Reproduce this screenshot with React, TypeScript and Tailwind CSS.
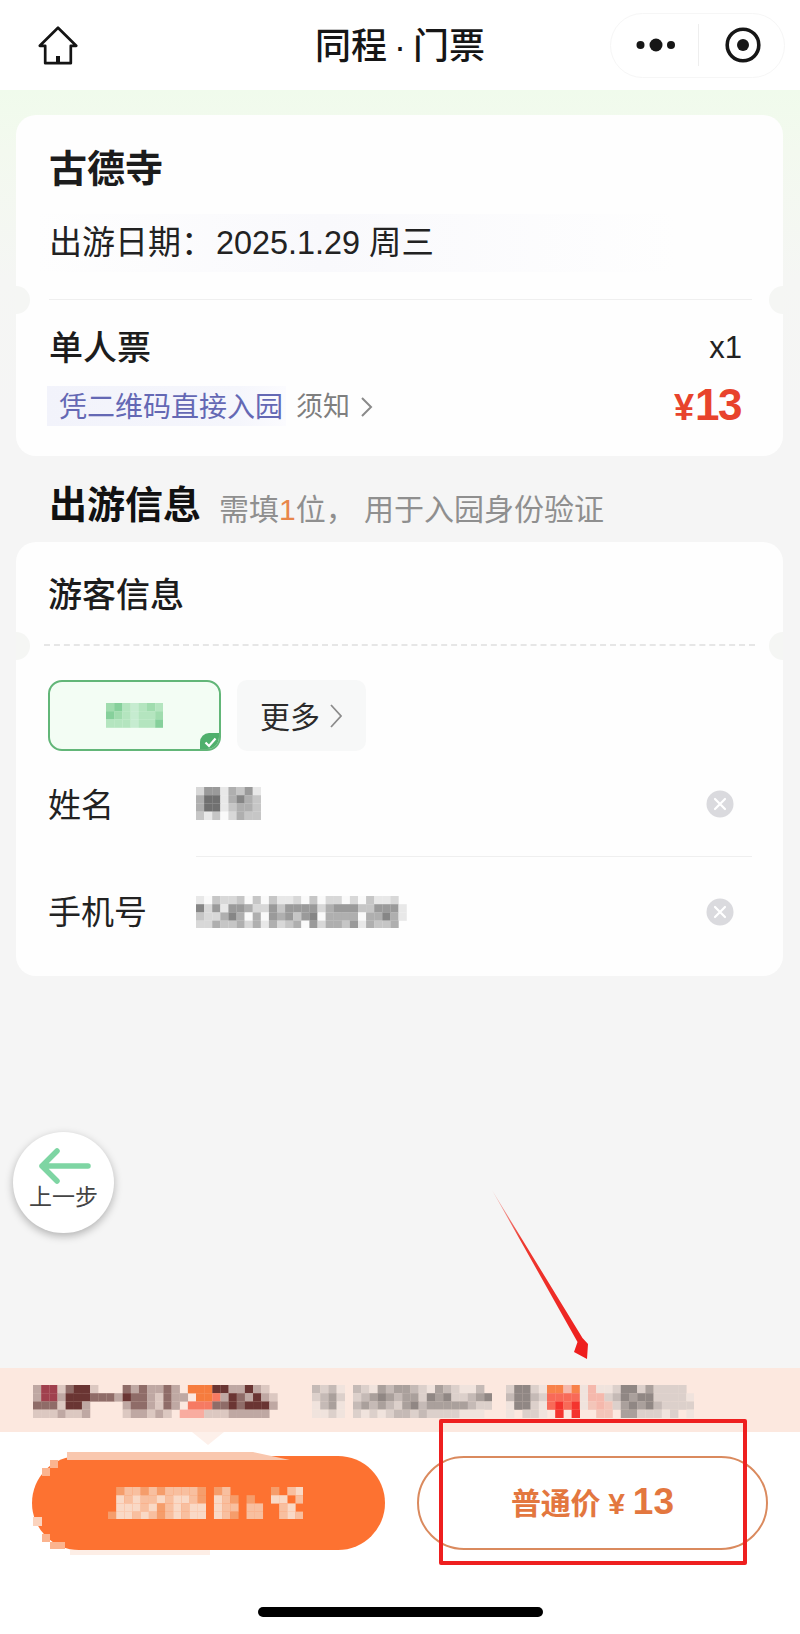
import React from "react";

const FONT = "font-['Liberation_Sans','Noto_Sans_CJK_SC',sans-serif]";

function Mosaic({ rows, palette, cw = 8, ch = 8, className = "" }: { rows: string[]; palette: Record<string, string>; cw?: number; ch?: number; className?: string }) {
  const cols = Math.max(...rows.map((r) => r.length));
  return (
    <svg width={cols * cw} height={rows.length * ch} viewBox={`0 0 ${cols * cw} ${rows.length * ch}`} className={"block shrink-0 blur-[0.5px] " + className}>
      {rows.flatMap((r, y) =>
        r.split("").map((c, x) =>
          palette[c] ? <rect key={x + "-" + y} x={x * cw} y={y * ch} width={cw + 0.2} height={ch + 0.2} fill={palette[c]} /> : null
        )
      )}
    </svg>
  );
}

const GRAY: Record<string, string> = { "0": "#fafafa", "1": "#e8e8e8", "2": "#d8d8d8", "3": "#c6c6c6", "4": "#afafaf", "5": "#9a9a9a", "6": "#868686", "7": "#707070" };
const GREEN: Record<string, string> = { a: "#a0dcae", b: "#86d09b", c: "#b4e5bf", d: "#c6ecd0" };
const PROMO: Record<string, string> = {
  a: "#bfa8a3", b: "#a0404e", c: "#6a3533", d: "#8f6c68", e: "#dcc8c1", f: "#f67c3e", g: "#f67a63", h: "#f9aca0",
  "1": "#f0e3dd", "2": "#dcd0cb", "3": "#c5bab6", "4": "#aaa09c", "5": "#908784", "6": "#7c7472",
  r: "#f4342e", s: "#f86a58", o: "#f88149", t: "#f5b8ac", u: "#f3c5b9",
};
const CREAM: Record<string, string> = { l: "#f9d9c6", m: "#f8bf9f", n: "#f59d6b" };

function CloseDot() {
  return (
    <svg width="28" height="28" viewBox="0 0 28 28" className="shrink-0">
      <circle cx="14" cy="14" r="13.5" fill="#dadade" />
      <path d="M9 9 L19 19 M19 9 L9 19" stroke="#fff" strokeWidth="2.2" strokeLinecap="round" />
    </svg>
  );
}

function Notches({ top }: { top: string }) {
  return (
    <>
      <div className={"absolute -left-[14px] w-[28px] h-[28px] rounded-full bg-[#f5f6f4] " + top} />
      <div className={"absolute -right-[14px] w-[28px] h-[28px] rounded-full bg-[#f5f6f4] " + top} />
    </>
  );
}

export default function App() {
  return (
    <div className={"relative w-[800px] h-[1634px] flex flex-col overflow-hidden bg-[#f5f5f5] text-[#1c1c1c] " + FONT}>
      {/* Header */}
      <header className="h-[90px] shrink-0 bg-white grid grid-cols-[1fr_auto_1fr] items-center">
        <div className="pl-[38px]">
          <svg width="40" height="39" viewBox="0 0 40 39" fill="none" className="block">
            <path d="M20 1.8 L38.2 19.8 H32.8 V37.2 H7.2 V19.8 H1.8 Z" stroke="#141414" strokeWidth="2.7" strokeLinejoin="round" />
            <path d="M20 30 V37" stroke="#141414" strokeWidth="4" />
          </svg>
        </div>
        <h1 className="pt-[3px] text-[36px] leading-[44px] font-medium text-[#161616] flex">
          同程<span className="mx-[7px]">·</span>门票
        </h1>
        <div className="flex justify-end pr-[15px]">
          <div className="w-[175px] h-[65px] rounded-full border border-[#f6f6f6] bg-white flex items-center">
            <div className="w-[87px] flex justify-center pl-[3px]">
              <svg width="40" height="14" viewBox="0 0 40 14">
                <circle cx="4.5" cy="7" r="4" fill="#161616" />
                <circle cx="20" cy="7" r="6.5" fill="#161616" />
                <circle cx="35" cy="7" r="4" fill="#161616" />
              </svg>
            </div>
            <div className="w-px h-[42px] bg-[#eeeeee]" />
            <div className="flex-1 flex justify-center pl-[2px]">
              <svg width="36" height="36" viewBox="0 0 36 36">
                <circle cx="18" cy="18" r="15.8" fill="none" stroke="#161616" strokeWidth="3.6" />
                <circle cx="18" cy="18" r="6" fill="#161616" />
              </svg>
            </div>
          </div>
        </div>
      </header>

      {/* Main */}
      <main className="flex-1 pl-[16px] pr-[17px] pt-[25px] bg-[linear-gradient(180deg,#f0fbec_0%,#f3f9ef_60px,#f5f6f4_190px,#f5f5f5_320px)]">
        {/* Card 1 */}
        <section className="relative h-[341px] rounded-[20px] bg-[#fefefe] overflow-hidden">
          <div className="h-[185px] ml-[33px] mr-[31px] border-b border-[#efefef]">
            <h2 className="pt-[30px] text-[38px] leading-[48px] font-bold">古德寺</h2>
            <div className="mt-[21px] -ml-[13px] pl-[13px] w-[640px] h-[58px] flex items-center text-[33px] text-[#222] bg-[linear-gradient(90deg,#fefefe,#f9f9fc_45%,#fefefe)]">
              出游日期：<span className="ml-[2px] text-[32.4px]">2025.1.29 周三</span>
            </div>
          </div>
          <Notches top="top-[171px]" />
          <div className="pl-[33px] pr-[41px]">
            <div className="pt-[31px] flex justify-between items-center h-[65px]">
              <span className="text-[34px] leading-[36px] font-medium">单人票</span>
              <span className="text-[31px] leading-[36px] text-[#222]">x1</span>
            </div>
            <div className="mt-[21px] flex items-center h-[40px] justify-between">
              <div className="flex items-center">
                <span className="-ml-[2px] w-[239px] h-[40px] pl-[12px] pt-[3px] flex items-center text-[28px] text-[#6468b4] bg-[linear-gradient(90deg,#f2f3fb,#f5f6fc_80%,#fbfbfe)] whitespace-nowrap">凭二维码直接入园</span>
                <span className="ml-[10px] pt-[2px] text-[27px] text-[#7f7f7f]">须知</span>
                <svg width="14" height="22" viewBox="0 0 14 22" fill="none" className="ml-[10px] mt-[2px]">
                  <path d="M2 2 L11 11 L2 20" stroke="#8a8a8a" strokeWidth="2" />
                </svg>
              </div>
              <div className="flex items-baseline font-bold text-[#e8432c] pr-[1px]">
                <span className="text-[36px] leading-[40px] mr-[1px]">¥</span>
                <span className="text-[44px] leading-[40px] tracking-[-1.5px]">13</span>
              </div>
            </div>
          </div>
        </section>

        {/* Section title */}
        <div className="h-[86px] pt-[30px] pl-[33px] flex items-baseline">
          <span className="text-[38px] leading-[38px] font-bold text-[#111]">出游信息</span>
          <span className="ml-[18px] translate-y-[2px] text-[30px] leading-[38px] text-[#8f8f8f] whitespace-nowrap">
            需填<span className="text-[#e8864a]">1</span>位， 用于入园身份验证
          </span>
        </div>

        {/* Card 2 */}
        <section className="relative h-[434px] rounded-[20px] bg-[#fefefe] overflow-hidden">
          <div className="h-[104px] mx-[28px] border-b-2 border-dashed border-[#e6e6e6] pl-[4px]">
            <h3 className="pt-[31px] text-[34px] leading-[44px] font-medium">游客信息</h3>
          </div>
          <Notches top="top-[90px]" />
          <div className="pl-[32px] pr-[31px] pt-[34px]">
            <div className="flex gap-[16px]">
              <div className="relative w-[173px] h-[71px] rounded-[14px] border-2 border-[#62b678] bg-[#f3fdf4] flex items-center justify-center overflow-hidden">
                <Mosaic rows={["abcdcac", "bacdcca", "cccdccb"]} palette={GREEN} cw={8.2} ch={8.2} />
                <div className="absolute right-[-2px] bottom-[-2px] w-[21px] h-[18px] bg-[#4fb06c] rounded-tl-[9px] flex items-center justify-center">
                  <svg width="13" height="11" viewBox="0 0 13 11" fill="none">
                    <path d="M1.5 5.5 L5 9 L11.5 1.5" stroke="#fff" strokeWidth="2.2" />
                  </svg>
                </div>
              </div>
              <div className="w-[129px] h-[71px] rounded-[10px] bg-[#f7f8f8] flex items-center pl-[23px] text-[30px] text-[#2b2b2b]">
                <span className="pt-[3px]">更多</span>
                <svg width="14" height="26" viewBox="0 0 14 26" fill="none" className="ml-[9px]">
                  <path d="M2 2 L12 13 L2 24" stroke="#8c8c8c" strokeWidth="1.8" />
                </svg>
              </div>
            </div>
            <div className="flex h-[106px]">
              <div className="w-[148px] pt-[3px] flex items-center text-[33px] text-[#222]">姓名</div>
              <div className="flex-1 flex items-center border-b border-[#efefef] pr-[18px] justify-between">
                <Mosaic rows={["25514351", "47714643", "47713443", "31302433"]} palette={GRAY} cw={8.1} ch={8.2} />
                <CloseDot />
              </div>
            </div>
            <div className="flex h-[110px]">
              <div className="w-[148px] pt-[2px] flex items-center text-[33px] text-[#222]">手机号</div>
              <div className="flex-1 flex items-center pr-[18px] justify-between">
                <Mosaic
                  rows={["1032230303112030220203112", "62515542253555524555335551", "32246404054535604444044641", "2243342414234052443514334"]}
                  palette={GRAY}
                  cw={8.1}
                  ch={8.2}
                />
                <CloseDot />
              </div>
            </div>
          </div>
        </section>
      </main>

      {/* Promo band */}
      <div className="relative h-[64px] shrink-0 bg-[#fce8df] flex items-center pl-[33px] pt-[3px]">
        <Mosaic
          rows={[
            "abbedcce...dadaada.fffccaacae",
            "abbaccc" + "ddd" + "acddaedaa.ffgacdacae",
            "dddecca...." + "addaeda.gggddcdccca",
            "eeeaeea...." + "eaaeae.hhheeeaaaaa",
          ]}
          palette={PROMO}
          cw={8.15}
          ch={8.2}
        />
        <Mosaic
          rows={["3231.3214344321432113", "2342.23454344254522345", "1341.34343245344444322", "1121.2121233232222111"]}
          palette={PROMO}
          cw={8.2}
          ch={8.2}
          className="ml-[34px]"
        />
        <Mosaic
          rows={["25521ooto1t11255242222", "35532ssss1tt23545522221", "15521srsr1utu2454532222", "1.221.r.r..uu.4422212.1"]}
          palette={PROMO}
          cw={8.2}
          ch={8.2}
          className="ml-[14px]"
        />
        <div className="absolute left-[192px] top-full w-0 h-0 border-l-[16px] border-r-[16px] border-t-[13px] border-l-transparent border-r-transparent border-t-[#fdf0ea]" />
      </div>

      {/* Bottom */}
      <div className="h-[202px] shrink-0 bg-white">
        <div className="pt-[24px] pl-[32px] flex gap-[32px]">
          <button className="relative w-[353px] h-[94px] rounded-full bg-[#fd7231] flex items-center justify-center">
            <svg width="352" height="106" viewBox="0 0 352 106" className="absolute left-0 -top-[5px]">
              <polygon points="35,1 221,1 258,9 35,9" fill="#f9c7ae" />
              <rect x="38" y="99" width="140" height="5" fill="#fdeee6" />
              <rect x="18" y="9" width="8" height="8" fill="#fbb48f" />
              <rect x="10" y="17" width="8" height="8" fill="#fbb48f" />
              <rect x="1" y="66" width="9" height="9" fill="#fbd3bd" />
              <rect x="10" y="83" width="8" height="8" fill="#fbb48f" />
              <rect x="18" y="91" width="15" height="7" fill="#fbb48f" />
            </svg>
            <Mosaic
              rows={[".nmmnmnmmmmn.nm.....n.ml", ".lmlmmlmllmn.lmn.n..ll.m", ".lllmlnmlmll.lmm.mm..ml.", "nllmlmnmlmll.lmn.mm..mlm"]}
              palette={CREAM}
              cw={8.15}
              ch={8.2}
              className="relative mr-[6px]"
            />
          </button>
          <button className="w-[351px] h-[94px] rounded-full border-2 border-[#da8a5e] bg-white flex items-baseline justify-center pt-[26px] font-bold text-[#e3773f]">
            <span className="text-[30px] leading-[36px] tracking-[-0.3px]">普通价</span>
            <span className="ml-[8px] text-[30px] leading-[36px]">¥</span>
            <span className="ml-[8px] text-[37px] leading-[36px] font-bold">13</span>
          </button>
        </div>
        <div className="mt-[57px] mx-auto w-[285px] h-[10px] rounded-full bg-black" />
      </div>

      {/* Floating back button */}
      <div className="absolute left-[13px] top-[1132px] w-[101px] h-[101px] rounded-full bg-white shadow-[0_3px_9px_rgba(0,0,0,0.28)] flex flex-col items-center">
        <svg width="52" height="36" viewBox="0 0 52 36" fill="none" className="mt-[16px] ml-[3px]">
          <path d="M3 18 H49 M18 3 L3 18 L18 33" stroke="#7ed5a3" strokeWidth="5.5" strokeLinecap="round" strokeLinejoin="round" />
        </svg>
        <span className="text-[23px] leading-[24px] text-[#444] mt-[1px] whitespace-nowrap">上一步</span>
      </div>

      {/* Annotation: arrow + box */}
      <svg width="120" height="190" viewBox="0 0 120 190" className="absolute left-[480px] top-[1180px]">
        <defs>
          <linearGradient id="arrowFade" x1="12" y1="10" x2="107" y2="179" gradientUnits="userSpaceOnUse">
            <stop offset="0" stopColor="#f3c9c6" />
            <stop offset="0.3" stopColor="#ee3a30" />
            <stop offset="1" stopColor="#ee1c1c" />
          </linearGradient>
        </defs>
        <polygon points="12,10 102.5,158 108,164 107,179 94,172 97.5,162" fill="url(#arrowFade)" />
      </svg>
      <div className="absolute left-[439px] top-[1419px] w-[308px] h-[146px] border-[4px] border-[#ee1f1f] rounded-[2px]" />
    </div>
  );
}
